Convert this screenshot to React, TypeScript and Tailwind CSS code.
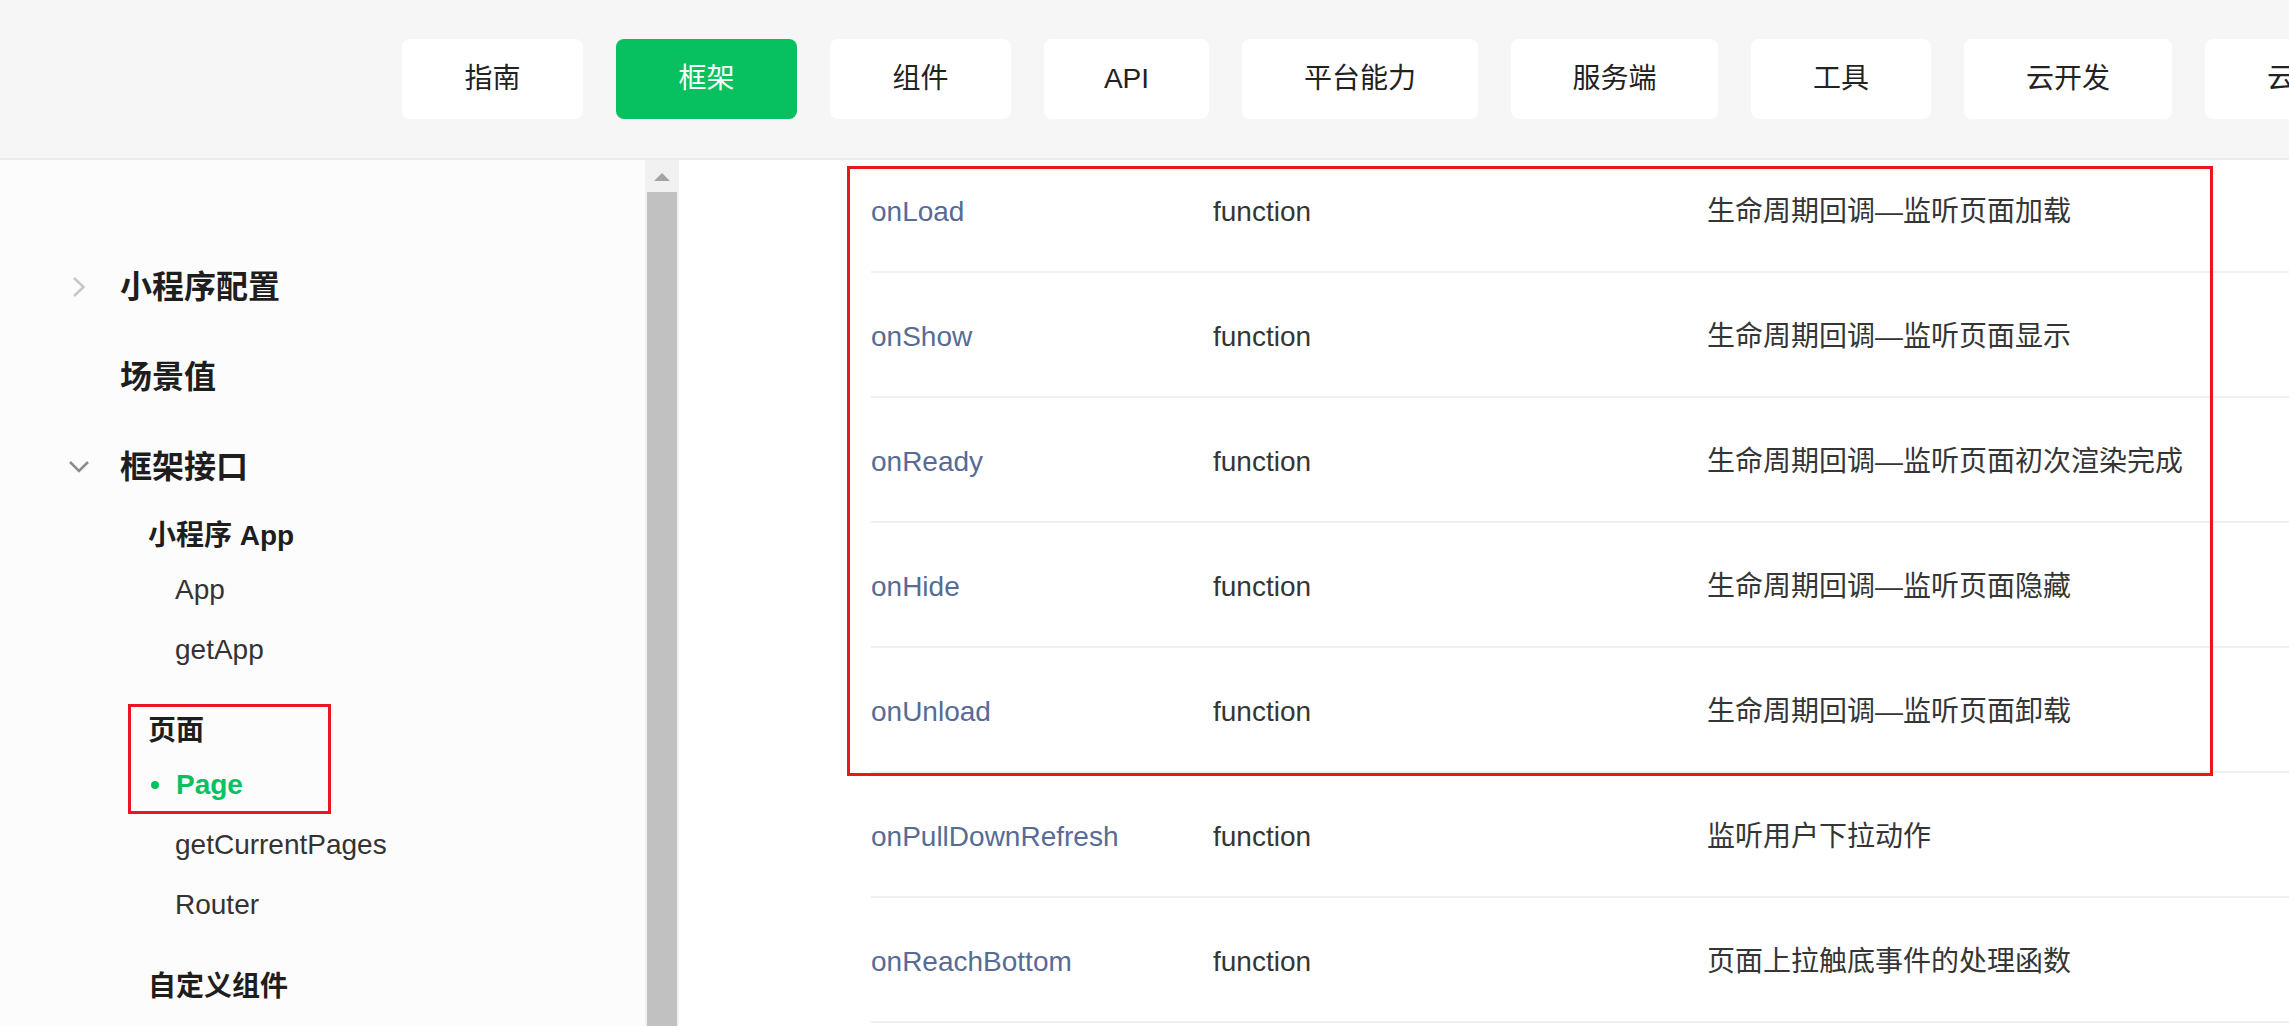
import React from "react";

// ─── Data ────────────────────────────────────────────────────────────────────

const NAV = [
  { label: "指南", w: "w-[181px]" },
  { label: "框架", w: "w-[181px]", active: true },
  { label: "组件", w: "w-[181px]" },
  { label: "API", w: "w-[165px]" },
  { label: "平台能力", w: "w-[236px]" },
  { label: "服务端", w: "w-[207px]" },
  { label: "工具", w: "w-[180px]" },
  { label: "云开发", w: "w-[208px]" },
  { label: "云托管", w: "w-[208px]" },
];

const ROWS = [
  ["onLoad", "生命周期回调—监听页面加载"],
  ["onShow", "生命周期回调—监听页面显示"],
  ["onReady", "生命周期回调—监听页面初次渲染完成"],
  ["onHide", "生命周期回调—监听页面隐藏"],
  ["onUnload", "生命周期回调—监听页面卸载"],
  ["onPullDownRefresh", "监听用户下拉动作"],
  ["onReachBottom", "页面上拉触底事件的处理函数"],
];

// ─── Header ──────────────────────────────────────────────────────────────────

function Header() {
  return (
    <header className="h-[160px] shrink-0 bg-[#f6f6f6] border-b-2 border-[#ececec] flex items-center pl-[402px] gap-[33px] overflow-hidden">
      {NAV.map((n) => (
        <div
          key={n.label}
          className={`${n.w} h-[80px] shrink-0 rounded-lg flex items-center justify-center text-[28px] ${
            n.active ? "bg-[#07c160] text-white" : "bg-white text-[#222]"
          }`}
        >
          {n.label}
        </div>
      ))}
    </header>
  );
}

// ─── Sidebar ─────────────────────────────────────────────────────────────────

function Chevron({ dir }: { dir: "right" | "down" }) {
  return (
    <svg width="20" height="20" viewBox="0 0 20 20" className="ml-[69px] shrink-0">
      {dir === "right" ? (
        <polyline points="5,1 14.5,10 5,19" fill="none" stroke="#c8c8c8" strokeWidth="2.6" />
      ) : (
        <polyline points="1,5 10,14 19,5" fill="none" stroke="#8c8c8c" strokeWidth="2.6" />
      )}
    </svg>
  );
}

function TopItem({ label, chevron }: { label: string; chevron?: "right" | "down" }) {
  return (
    <div className="h-[90px] flex items-center">
      <div className="w-[120px] shrink-0 flex items-center">{chevron && <Chevron dir={chevron} />}</div>
      <span className="text-[32px] font-bold text-[#1e1e1e]">{label}</span>
    </div>
  );
}

function GroupTitle({ label, className = "" }: { label: string; className?: string }) {
  return (
    <div className={`h-[48px] flex items-center pl-[148px] text-[28px] font-bold text-[#1e1e1e] ${className}`}>
      {label}
    </div>
  );
}

function SubItem({ label, active = false }: { label: string; active?: boolean }) {
  return (
    <div className="h-[60px] flex items-center text-[28px]">
      {active ? (
        <>
          <span className="ml-[151px] w-2 h-2 rounded-full bg-[#07c160] shrink-0" />
          <span className="ml-[17px] font-bold text-[#07c160]">{label}</span>
        </>
      ) : (
        <span className="ml-[175px] text-[#333]">{label}</span>
      )}
    </div>
  );
}

function Sidebar() {
  return (
    <aside className="w-[645px] shrink-0 bg-[#fcfcfc] pt-[82px] overflow-hidden">
      <TopItem label="小程序配置" chevron="right" />
      <TopItem label="场景值" />
      <TopItem label="框架接口" chevron="down" />
      <GroupTitle label="小程序 App" />
      <SubItem label="App" />
      <SubItem label="getApp" />
      <GroupTitle label="页面" className="mt-[27px]" />
      <SubItem label="Page" active />
      <SubItem label="getCurrentPages" />
      <SubItem label="Router" />
      <GroupTitle label="自定义组件" className="mt-[28px]" />
    </aside>
  );
}

function Scrollbar() {
  return (
    <div className="w-[34px] shrink-0 bg-[#f1f1f1] flex flex-col">
      <div className="h-[32px] flex justify-center pt-[13px]">
        <div className="w-0 h-0 border-l-[8px] border-r-[8px] border-b-[8px] border-l-transparent border-r-transparent border-b-[#a3a3a3]" />
      </div>
      <div className="flex-1 ml-[2px] mr-[2px] bg-[#c1c1c1]" />
    </div>
  );
}

// ─── Main table ──────────────────────────────────────────────────────────────

function Table() {
  return (
    <main className="flex-1 bg-white overflow-hidden pl-[192px]">
      <div className="mt-[-12px]">
        {ROWS.map(([name, desc]) => (
          <div
            key={name}
            className="h-[125px] pt-[5px] grid grid-cols-[342px_494px_1fr] items-center border-b-2 border-[#f0f0f0] text-[28px]"
          >
            <span className="text-[#576b95]">{name}</span>
            <span className="text-[#353535]">function</span>
            <span className="text-[#353535]">{desc}</span>
          </div>
        ))}
      </div>
    </main>
  );
}

// ─── App ─────────────────────────────────────────────────────────────────────

export default function App() {
  return (
    <div className="relative w-[2289px] h-[1026px] overflow-hidden bg-white flex flex-col [font-family:'Liberation_Sans','Noto_Sans_CJK_SC',sans-serif]">
      <Header />
      <div className="flex flex-1 min-h-0">
        <Sidebar />
        <Scrollbar />
        <Table />
      </div>

      {/* red annotation boxes */}
      <div className="absolute left-[847px] top-[166px] w-[1366px] h-[610px] border-[3px] border-[#e8161f] pointer-events-none" />
      <div className="absolute left-[128px] top-[704px] w-[203px] h-[110px] border-[3px] border-[#e8161f] pointer-events-none" />
    </div>
  );
}
